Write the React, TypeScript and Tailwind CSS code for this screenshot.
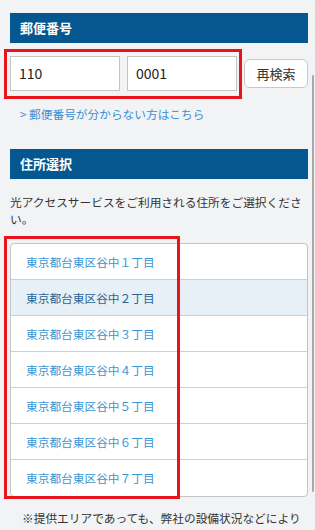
import React from "react";

const rows = [
  "東京都台東区谷中１丁目",
  "東京都台東区谷中２丁目",
  "東京都台東区谷中３丁目",
  "東京都台東区谷中４丁目",
  "東京都台東区谷中５丁目",
  "東京都台東区谷中６丁目",
  "東京都台東区谷中７丁目",
];

export default function App() {
  return (
    <div
      className="relative w-[315px] h-[530px] overflow-hidden bg-[#f2f3f5] text-[#333]"
      style={{ fontFamily: '"Noto Sans CJK JP", "Noto Sans", sans-serif' }}
    >
      <div className="pl-[10px] pr-[7px] pt-[13px]">
        <div className="h-[30px] bg-[#05578f] flex items-center pl-[10px] text-white text-[13px] font-bold">
          郵便番号
        </div>
        <div className="mt-[13px] flex items-center">
          <div className="w-[110px] h-[35px] bg-white border border-[#c4c4c4] flex items-center pl-[8px] text-[14px] text-[#222]">
            110
          </div>
          <div className="ml-[7px] w-[110px] h-[35px] bg-white border border-[#c4c4c4] flex items-center pl-[8px] text-[14px] text-[#222]">
            0001
          </div>
          <div className="ml-[7px] w-[64px] h-[29px] bg-white border border-[#c8c8c8] rounded-[6px] flex items-center justify-center text-[13px] text-[#333]">
            再検索
          </div>
        </div>
        <div className="mt-[14px] pl-[10px] text-[11.7px] leading-[18px] text-[#3a8fd0]">
          &gt; 郵便番号が分からない方はこちら
        </div>
        <div className="mt-[26px] h-[30px] bg-[#05578f] flex items-center pl-[10px] text-white text-[13px] font-bold">
          住所選択
        </div>
        <p className="mt-[14px] text-[11.7px] leading-[17px] text-[#333]">
          光アクセスサービスをご利用される住所をご選択ください。
        </p>
        <div className="mt-[16px] bg-white border border-[#c4c4c4] rounded-[4px] overflow-hidden">
          {rows.map((r, i) => (
            <div
              key={r}
              className={
                "h-[36px] flex items-center pl-[15px] text-[11.7px] " +
                (i < rows.length - 1 ? "border-b border-[#cfcfcf] " : "") +
                (i === 1 ? "bg-[#e8f0f7] text-[#2a6496]" : "text-[#3a95d3]")
              }
            >
              {r}
            </div>
          ))}
        </div>
        <p className="mt-[12px] pl-[12px] text-[11.7px] leading-[17px] text-[#333] whitespace-nowrap">
          ※提供エリアであっても、弊社の設備状況などにより
        </p>
      </div>

      {/* red annotation boxes */}
      <div className="absolute left-[4px] top-[49px] w-[238px] h-[50px] border-[3px] border-[#e8141b]" />
      <div className="absolute left-[4px] top-[236px] w-[176px] h-[263px] border-[3px] border-[#e8141b]" />

      {/* scrollbar thumb */}
      <div className="absolute left-[312px] top-[75px] w-[2px] h-[417px] rounded-full bg-[#a8a8a8]" />
    </div>
  );
}
